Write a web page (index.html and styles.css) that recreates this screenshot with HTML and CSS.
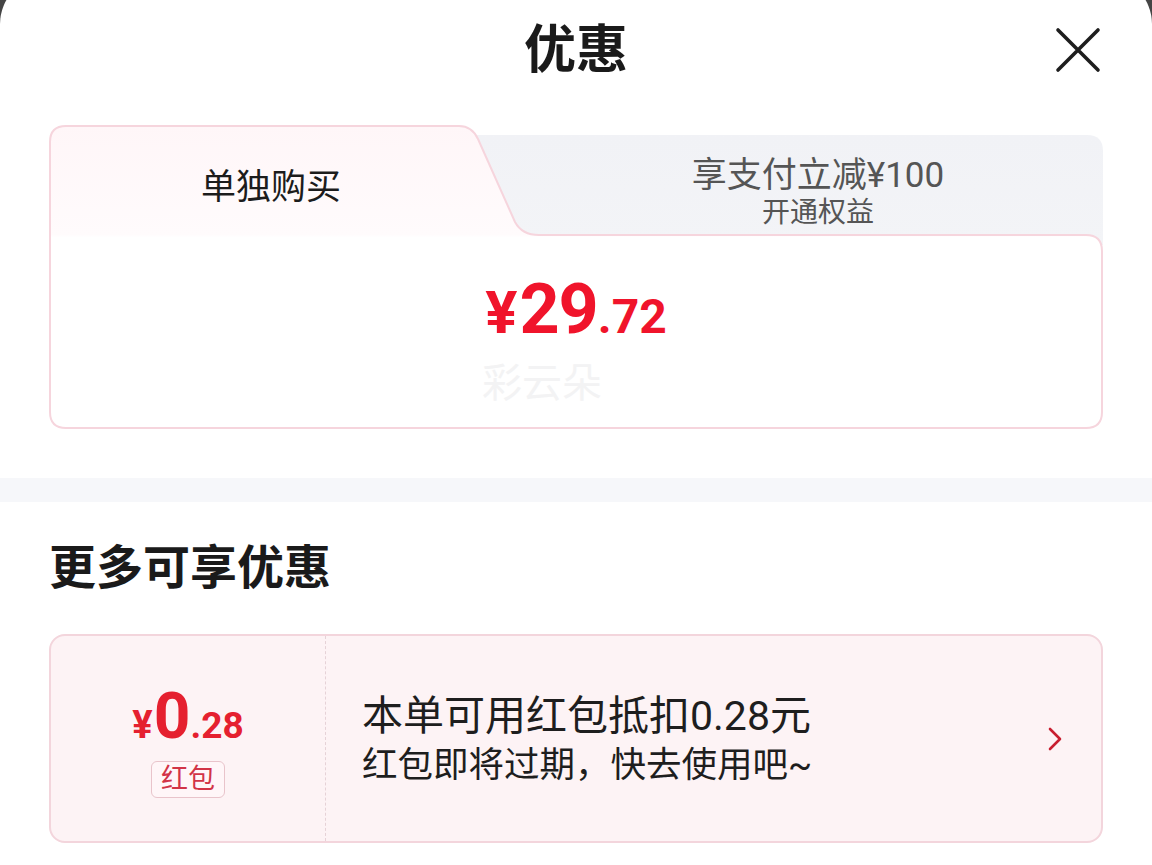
FILE: index.html
```html
<!DOCTYPE html>
<html lang="zh-CN">
<head>
<meta charset="utf-8">
<title>优惠</title>
<link rel="stylesheet" href="styles.css">
</head>
<body>
<div class="sheet">
  <section class="top">
    <header class="header">
      <span></span>
      <h1 class="title">优惠</h1>
      <button class="close" aria-label="关闭">
        <svg width="46" height="46" viewBox="0 0 46 46"><path d="M3 3 L43 43 M43 3 L3 43" stroke="#1e1e1e" stroke-width="3.6" stroke-linecap="round" fill="none"/></svg>
      </button>
    </header>

    <div class="card">
      <svg class="card-bg" viewBox="0 0 1054 304" preserveAspectRatio="none" aria-hidden="true">
        <defs>
          <linearGradient id="gray" x1="0" y1="0" x2="0" y2="1">
            <stop offset="0" stop-color="#f1f2f6"/>
            <stop offset="1" stop-color="#f3f4f7"/>
          </linearGradient>
          <linearGradient id="act" x1="0" y1="0" x2="0" y2="304" gradientUnits="userSpaceOnUse">
            <stop offset="0" stop-color="#fff6f8"/>
            <stop offset="0.36" stop-color="#fffbfc"/>
            <stop offset="0.37" stop-color="#ffffff"/>
            <stop offset="1" stop-color="#ffffff"/>
          </linearGradient>
        </defs>
        <path d="M410 10 H1038 Q1054 10 1054 26 V120 H410 Z" fill="url(#gray)"/>
        <path d="M1 110 V17 Q1 1 17 1 H410 Q423 1 429 14 L466 97 Q473 110 490 110 H1037 Q1053 110 1053 126 V287 Q1053 303 1037 303 H17 Q1 303 1 287 Z" fill="url(#act)" stroke="#f6d5dd" stroke-width="2"/>
      </svg>
      <div class="tabs">
        <div class="tab tab-active">单独购买</div>
        <div class="tab tab-other">
          <span class="tab-main">享支付立减¥100</span>
          <span class="tab-sub">开通权益</span>
        </div>
      </div>
      <div class="card-body">
        <div class="price">
          <span class="p-cur">¥</span><span class="p-int">29</span><span class="p-dec">.72</span>
        </div>
        <div class="watermark">彩云朵</div>
      </div>
    </div>
  </section>

  <div class="band"></div>

  <section class="more">
    <h2 class="more-title">更多可享优惠</h2>
    <div class="coupon">
      <div class="coupon-left">
        <div class="c-price">
          <span class="c-cur">¥</span><span class="c-int">0</span><span class="c-dec">.28</span>
        </div>
        <span class="c-tag">红包</span>
      </div>
      <div class="coupon-right">
        <div class="c-text">
          <p class="c-line1">本单可用红包抵扣0.28元</p>
          <p class="c-line2">红包即将过期，快去使用吧~</p>
        </div>
        <svg class="chev" width="16" height="26" viewBox="0 0 16 26"><path d="M3 3 L13 13 L3 23" stroke="#c81f30" stroke-width="2.6" fill="none" stroke-linecap="round" stroke-linejoin="round"/></svg>
      </div>
    </div>
  </section>
</div>
</body>
</html>
```

FILE: styles.css
```css
* { box-sizing: border-box; }
html, body { margin: 0; padding: 0; }
body {
  background: #454545;
  font-family: Roboto, "Noto Sans CJK SC", sans-serif;
  color: #222;
  overflow: hidden;
  height: 865px;
}
.sheet {
  background: #fff;
  margin-top: -24px;
  padding-top: 24px;
  border-radius: 48px 48px 0 0;
  min-height: 900px;
}
.top { padding: 0 49px 49px; }
.header {
  height: 100px;
  display: grid;
  grid-template-columns: 1fr auto 1fr;
  align-items: center;
}
.title {
  margin: 0;
  font-size: 52px;
  font-weight: 700;
  color: #1a1a1a;
  line-height: 1;
  padding-top: 2px;
}
.close {
  justify-self: end;
  margin-right: 2px;
  background: none;
  border: 0;
  padding: 0;
  display: flex;
}
.card {
  position: relative;
  margin-top: 25px;
  height: 304px;
  display: flex;
  flex-direction: column;
}
.card-bg {
  position: absolute;
  inset: 0;
  width: 100%;
  height: 100%;
}
.tabs {
  position: relative;
  display: flex;
  height: 110px;
}
.tab { display: flex; flex-direction: column; align-items: center; }
.tab-active {
  flex: 0 0 444px;
  font-size: 35px;
  line-height: 41px;
  padding-top: 42px;
  color: #1c1c1c;
}
.tab-other {
  flex: 1;
  margin-left: 40px;
  padding-top: 31px;
  color: #555;
}
.tab-main { font-size: 35px; line-height: 40px; }
.tab-sub { font-size: 28px; line-height: 34px; }
.card-body {
  position: relative;
  flex: 1;
  display: flex;
  flex-direction: column;
  align-items: center;
  padding-top: 39px;
}
.price {
  display: flex;
  align-items: baseline;
  color: #f0142b;
  font-family: Roboto, sans-serif;
  font-weight: 700;
  line-height: 1;
}
.p-cur { font-size: 60px; margin-right: 2px; }
.p-int { font-size: 70px; letter-spacing: -1px; }
.p-dec { font-size: 48px; }
.watermark {
  margin-top: 20px;
  margin-right: 68px;
  font-size: 40px;
  line-height: 1;
  color: #f3f3f4;
}
.band { height: 24px; background: #f6f7fa; }
.more { padding: 0 49px; }
.more-title {
  margin: 36px 0 36px 0;
  font-size: 47px;
  line-height: 60px;
  font-weight: 700;
  color: #1a1a1a;
}
.coupon {
  display: flex;
  height: 209px;
  background: #fdf3f5;
  border: 2px solid #f3d5dc;
  border-radius: 16px;
}
.coupon-left {
  flex: 0 0 275px;
  border-right: 1.5px dashed #e6d2d7;
  display: flex;
  flex-direction: column;
  align-items: center;
  justify-content: center;
  padding-top: 6px;
}
.c-price {
  display: flex;
  align-items: baseline;
  color: #e5202f;
  font-weight: 700;
  line-height: 1;
}
.c-cur { font-size: 38px; margin-right: 1px; }
.c-int { font-size: 64px; }
.c-dec { font-size: 37px; }
.c-tag {
  margin-top: 12px;
  font-size: 27px;
  line-height: 33px;
  padding: 1px 9px;
  color: #d23447;
  background: #fff6f8;
  border: 1.5px solid #e9c4cb;
  border-radius: 6px;
}
.coupon-right {
  flex: 1;
  display: flex;
  align-items: center;
  padding-left: 36px;
  padding-right: 38px;
}
.c-text { flex: 1; }
.c-text p { margin: 0; color: #1e1e1e; }
.c-line1 { font-size: 41px; line-height: 50px; }
.c-line2 { font-size: 35.5px; line-height: 44px; margin-top: 2px !important; }
.chev { flex: none; }
```
